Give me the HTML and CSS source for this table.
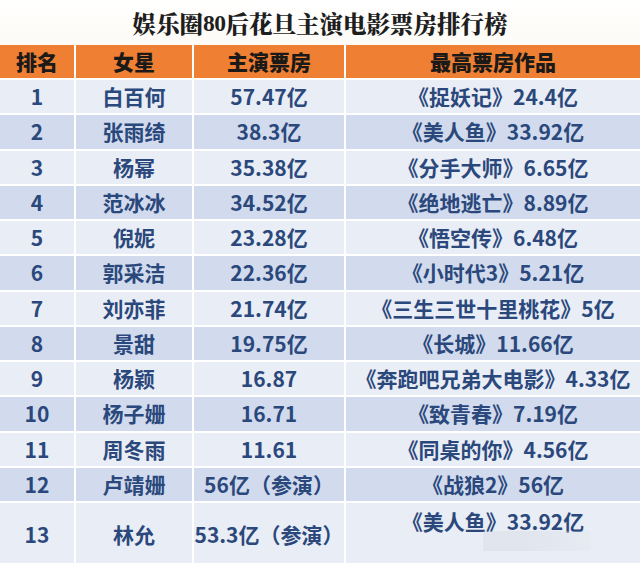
FILE: index.html
```html
<!DOCTYPE html>
<html lang="zh">
<head>
<meta charset="utf-8">
<title>娱乐圈80后花旦主演电影票房排行榜</title>
<link rel="stylesheet" href="styles.css">
</head>
<body>
<div class="page">
  <h1 class="title">娱乐圈<span class="num">80</span>后花旦主演电影票房排行榜</h1>
  <div class="table">
    <div class="cell head">排名</div><div class="cell head">女星</div><div class="cell head">主演票房</div><div class="cell head">最高票房作品</div>

    <div class="cell odd">1</div><div class="cell odd">白百何</div><div class="cell odd">57.47亿</div><div class="cell odd">《捉妖记》24.4亿</div>
    <div class="cell even">2</div><div class="cell even">张雨绮</div><div class="cell even">38.3亿</div><div class="cell even">《美人鱼》33.92亿</div>
    <div class="cell odd">3</div><div class="cell odd">杨幂</div><div class="cell odd">35.38亿</div><div class="cell odd">《分手大师》6.65亿</div>
    <div class="cell even">4</div><div class="cell even">范冰冰</div><div class="cell even">34.52亿</div><div class="cell even">《绝地逃亡》8.89亿</div>
    <div class="cell odd">5</div><div class="cell odd">倪妮</div><div class="cell odd">23.28亿</div><div class="cell odd">《悟空传》6.48亿</div>
    <div class="cell even">6</div><div class="cell even">郭采洁</div><div class="cell even">22.36亿</div><div class="cell even">《小时代3》5.21亿</div>
    <div class="cell odd">7</div><div class="cell odd">刘亦菲</div><div class="cell odd">21.74亿</div><div class="cell odd">《三生三世十里桃花》5亿</div>
    <div class="cell even">8</div><div class="cell even">景甜</div><div class="cell even">19.75亿</div><div class="cell even">《长城》11.66亿</div>
    <div class="cell odd">9</div><div class="cell odd">杨颖</div><div class="cell odd">16.87</div><div class="cell odd">《奔跑吧兄弟大电影》4.33亿</div>
    <div class="cell even">10</div><div class="cell even">杨子姗</div><div class="cell even">16.71</div><div class="cell even">《致青春》7.19亿</div>
    <div class="cell odd">11</div><div class="cell odd">周冬雨</div><div class="cell odd">11.61</div><div class="cell odd">《同桌的你》4.56亿</div>
    <div class="cell even">12</div><div class="cell even">卢靖姗</div><div class="cell even">56亿（参演）</div><div class="cell even">《战狼2》56亿</div>
    <div class="cell odd last">13</div><div class="cell odd last">林允</div><div class="cell odd last">53.3亿（参演）</div><div class="cell odd last top">《美人鱼》33.92亿<span class="ghost"></span></div>
  </div>
</div>
</body>
</html>
```

FILE: styles.css
```css
html, body {
  margin: 0;
  padding: 0;
  background: #ffffff;
}

.page {
  width: 640px;
  height: 563px;
  overflow: hidden;
  font-family: "Noto Sans CJK SC", "Noto Sans", sans-serif;
}

.title {
  margin: 0;
  height: 45px;
  display: flex;
  align-items: center;
  justify-content: center;
  padding-top: 1px;
  box-sizing: border-box;
  font-family: "Noto Serif CJK SC", "Noto Sans CJK SC", serif;
  font-weight: 900;
  font-size: 23.5px;
  color: #1e1e1e;
  background: linear-gradient(#ffffff, #fdfbf6);
}

.num {
  font-family: "Liberation Serif", serif;
  font-weight: 700;
  letter-spacing: -0.5px;
}

.table {
  display: grid;
  grid-template-columns: 74px 116px 150px 294px;
  grid-template-rows: 33px repeat(12, 33.25px) 62px;
  column-gap: 2px;
  row-gap: 2px;
  background: #ffffff;
}

.cell {
  display: flex;
  align-items: center;
  justify-content: center;
  white-space: nowrap;
  font-size: 21px;
  font-weight: 700;
  color: #2b487c;
  line-height: 1;
  position: relative;
}

.head {
  background: #ee7f33;
  color: #1c1a18;
  font-weight: 900;
  font-size: 21px;
}

.odd {
  background: #e9edf5;
}

.even {
  background: #d1dbed;
}

.top {
  align-items: flex-start;
  padding-top: 8px;
}

.ghost {
  position: absolute;
  left: 137px;
  top: 28px;
  width: 108px;
  height: 20px;
  background: linear-gradient(90deg, rgba(200,205,215,0.25), rgba(215,220,228,0.45) 40%, rgba(225,229,236,0.3));
}
```
